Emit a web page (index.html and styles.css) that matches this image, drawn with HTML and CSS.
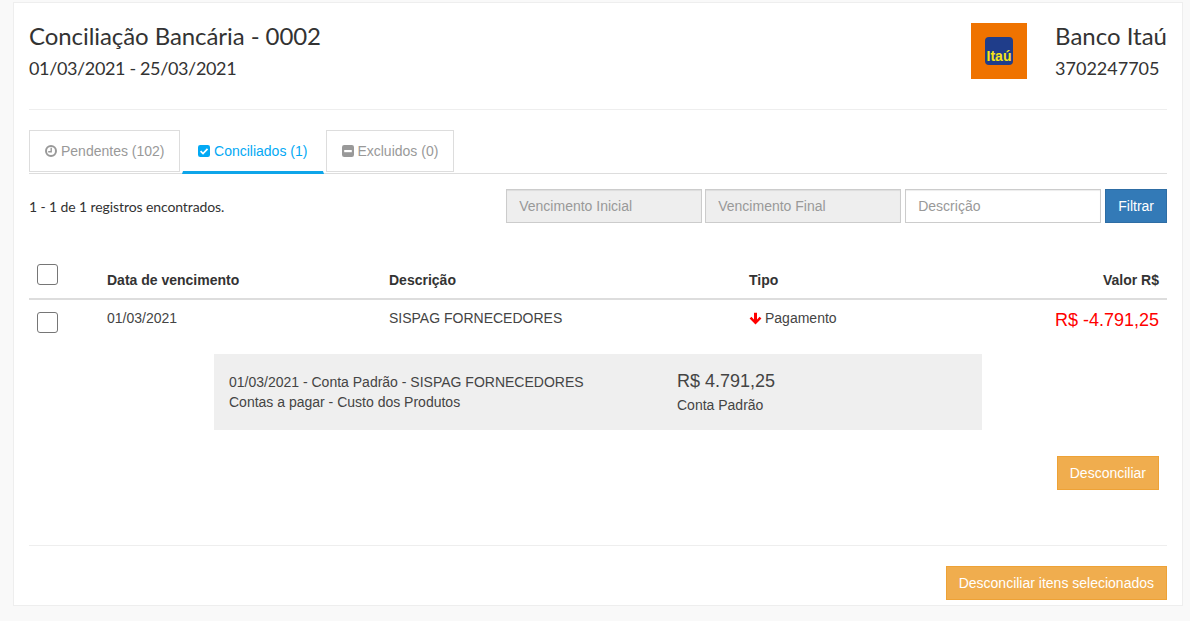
FILE: index.html
```html
<!DOCTYPE html>
<html lang="pt-BR">
<head>
    <meta charset="UTF-8">
    <title>Conciliação Bancária</title>
    <link rel="stylesheet" href="styles.css">
</head>
<body>
    <div class="card">
        <div class="header">
            <div class="header-left">
                <h1>Conciliação Bancária - 0002</h1>
                <p class="period">01/03/2021 - 25/03/2021</p>
            </div>
            <div class="bank-logo">
                <svg width="56" height="56" viewBox="0 0 56 56">
                    <rect width="56" height="56" fill="#ef7300"/>
                    <rect x="14" y="14" width="28" height="28" rx="4" fill="#1f3d8a"/>
                    <text x="28" y="38" class="logo-text" text-anchor="middle">Itaú</text>
                </svg>
            </div>
            <div class="header-right">
                <h2>Banco Itaú</h2>
                <p>3702247705</p>
            </div>
        </div>

        <ul class="tabs">
            <li class="tab">
                <svg class="tab-icon" viewBox="0 0 12 12"><circle cx="6" cy="6" r="5" fill="none" stroke="currentColor" stroke-width="2"/><path d="M6.2 2.8V6.8H3.2" fill="none" stroke="currentColor" stroke-width="1.4"/></svg>
                Pendentes (102)
            </li>
            <li class="tab active">
                <svg class="tab-icon" viewBox="0 0 12 12"><rect width="12" height="12" rx="2.2" fill="currentColor"/><path d="M2.6 6.2L5 8.5L9.5 3.8" fill="none" stroke="#fff" stroke-width="1.7"/></svg>
                Conciliados (1)
            </li>
            <li class="tab">
                <svg class="tab-icon" viewBox="0 0 12 12"><rect width="12" height="12" rx="2.2" fill="currentColor"/><rect x="2.2" y="5" width="7.6" height="2.2" fill="#fff"/></svg>
                Excluidos (0)
            </li>
        </ul>

        <div class="toolbar">
            <span class="count">1 - 1 de 1 registros encontrados.</span>
            <div class="filters">
                <input class="field readonly" placeholder="Vencimento Inicial" readonly>
                <input class="field readonly" placeholder="Vencimento Final" readonly>
                <input class="field" placeholder="Descrição">
                <button class="btn btn-primary">Filtrar</button>
            </div>
        </div>

        <div class="row row-head">
            <span class="check"></span>
            <span>Data de vencimento</span>
            <span>Descrição</span>
            <span>Tipo</span>
            <span class="right">Valor R$</span>
        </div>
        <div class="row row-body">
            <span class="check"></span>
            <span>01/03/2021</span>
            <span>SISPAG FORNECEDORES</span>
            <span class="tipo">
                <svg class="arrow" viewBox="0 0 13 13"><path d="M6.5 12.4L.6 6.5L2.4 4.7L5 7.4V.8H8V7.4L10.6 4.7L12.4 6.5Z" fill="#f00"/></svg>
                Pagamento
            </span>
            <span class="right value">R$ -4.791,25</span>
        </div>

        <div class="detail">
            <div class="detail-left">
                <div>01/03/2021 - Conta Padrão - SISPAG FORNECEDORES</div>
                <div>Contas a pagar - Custo dos Produtos</div>
            </div>
            <div class="detail-right">
                <div class="detail-value">R$ 4.791,25</div>
                <div>Conta Padrão</div>
            </div>
        </div>

        <div class="row-action">
            <button class="btn btn-warning">Desconciliar</button>
        </div>

        <div class="footer">
            <button class="btn btn-warning">Desconciliar itens selecionados</button>
        </div>
    </div>
</body>
</html>
```

FILE: styles.css
```css
* {
    box-sizing: border-box;
}
html, body {
    height: 100%;
}
body {
    margin: 0;
    padding: 2px 7px 0 13px;
    background-color: #f9f9f9;
    color: #333;
    font-family: "Liberation Sans", Arial, sans-serif;
    font-size: 14px;
    overflow: hidden;
}
.card {
    height: 604px;
    padding: 0 15px;
    background-color: #fff;
    border: 1px solid #eee;
}

.header {
    display: flex;
    align-items: flex-start;
    height: 107px;
    padding-top: 19px;
    border-bottom: 1px solid #eee;
    font-family: Lato, sans-serif;
}
.header-left {
    flex: 1;
}
.header h1, .header h2 {
    margin: 0;
    font-size: 24px;
    font-weight: 400;
    line-height: 28px;
    color: #333;
}
.header h1 {
    letter-spacing: -0.07px;
}
.header p {
    margin: 6px 0 0;
    font-size: 18px;
    line-height: 24px;
    color: #333;
}
.header .period {
    letter-spacing: -0.36px;
}
.bank-logo {
    height: 56px;
    margin-top: 1px;
    margin-right: 28px;
}
.logo-text {
    fill: #f5e618;
    font-family: "Liberation Sans", sans-serif;
    font-size: 14px;
    font-weight: 700;
}

.tabs {
    display: flex;
    gap: 2px;
    margin: 20px 0 0;
    padding: 0;
    list-style: none;
    border-bottom: 1px solid #ddd;
}
.tab {
    display: flex;
    align-items: center;
    gap: 4px;
    height: 42px;
    margin-bottom: 1px;
    padding: 0 14.5px 0 15px;
    border: 1px solid #ddd;
    color: #999;
}
.tab:last-child {
    gap: 3px;
}
.tab.active {
    height: 44px;
    margin-bottom: -1px;
    padding: 0 16px 0 15px;
    border: 0 solid transparent;
    border-width: 0 1px 3px;
    border-bottom-color: #0ea5e9;
    color: #03a9f4;
}
.tab-icon {
    width: 12px;
    height: 12px;
}

.toolbar {
    display: flex;
    justify-content: space-between;
    align-items: center;
    margin-top: 15px;
    font-family: Lato, sans-serif;
    font-size: 14px;
}
.count {
    letter-spacing: -0.1px;
}
.filters {
    display: flex;
    font-family: "Liberation Sans", sans-serif;
}
.field {
    width: 196px;
    height: 34px;
    margin-right: 3px;
    padding: 6px 12px;
    border: 1px solid #ccc;
    background-color: #fff;
    font-family: inherit;
    font-size: 14px;
    box-shadow: inset 0 1px 1px rgba(0, 0, 0, 0.075);
}
.field:last-of-type {
    margin-left: 1px;
}
.field.readonly {
    background-color: #eee;
}
.field::placeholder {
    color: #999;
    opacity: 1;
}
.btn {
    height: 34px;
    padding: 0 12px;
    border: 1px solid transparent;
    color: #fff;
    font-family: inherit;
    font-size: 14px;
}
.btn-primary {
    margin-left: 1px;
    background-color: #337ab7;
    border-color: #2e6da4;
}
.btn-warning {
    background-color: #f0ad4e;
    border-color: #eea236;
}

.row {
    display: grid;
    grid-template-columns: 78px 282px 360px 1fr 200px;
    padding-right: 8px;
}
.row .check {
    margin-left: 8px;
}
.check {
    display: block;
    width: 21px;
    height: 21px;
    border: 1px solid #767676;
    border-radius: 3px;
    background-color: #fff;
}
.row-head {
    align-items: end;
    height: 77px;
    padding-bottom: 10px;
    border-bottom: 2px solid #ddd;
    font-weight: 700;
}
.row-head .check {
    margin-bottom: 3px;
}
.row-body {
    align-items: start;
    height: 54px;
    padding-top: 10px;
    line-height: 16px;
    color: #444;
}
.row-body .check {
    margin-top: 2px;
}
.right {
    text-align: right;
}
.tipo {
    display: flex;
    align-items: center;
    gap: 3px;
}
.arrow {
    width: 13px;
    height: 13px;
}
.value {
    color: #f00;
    font-size: 18px;
    line-height: 20px;
}

.detail {
    display: flex;
    width: 768px;
    height: 76px;
    margin: 0 0 0 185px;
    padding: 18px 15px 0;
    background-color: #efefef;
    color: #444;
    line-height: 20px;
}
.detail-left {
    width: 448px;
}
.detail-value {
    margin-top: -1px;
    margin-bottom: 4px;
    font-size: 18px;
    line-height: 20px;
}

.row-action {
    display: flex;
    justify-content: flex-end;
    margin-top: 26px;
    padding-right: 8px;
}
.footer {
    display: flex;
    justify-content: flex-end;
    margin-top: 55px;
    padding-top: 20px;
    border-top: 1px solid #eee;
}
```
